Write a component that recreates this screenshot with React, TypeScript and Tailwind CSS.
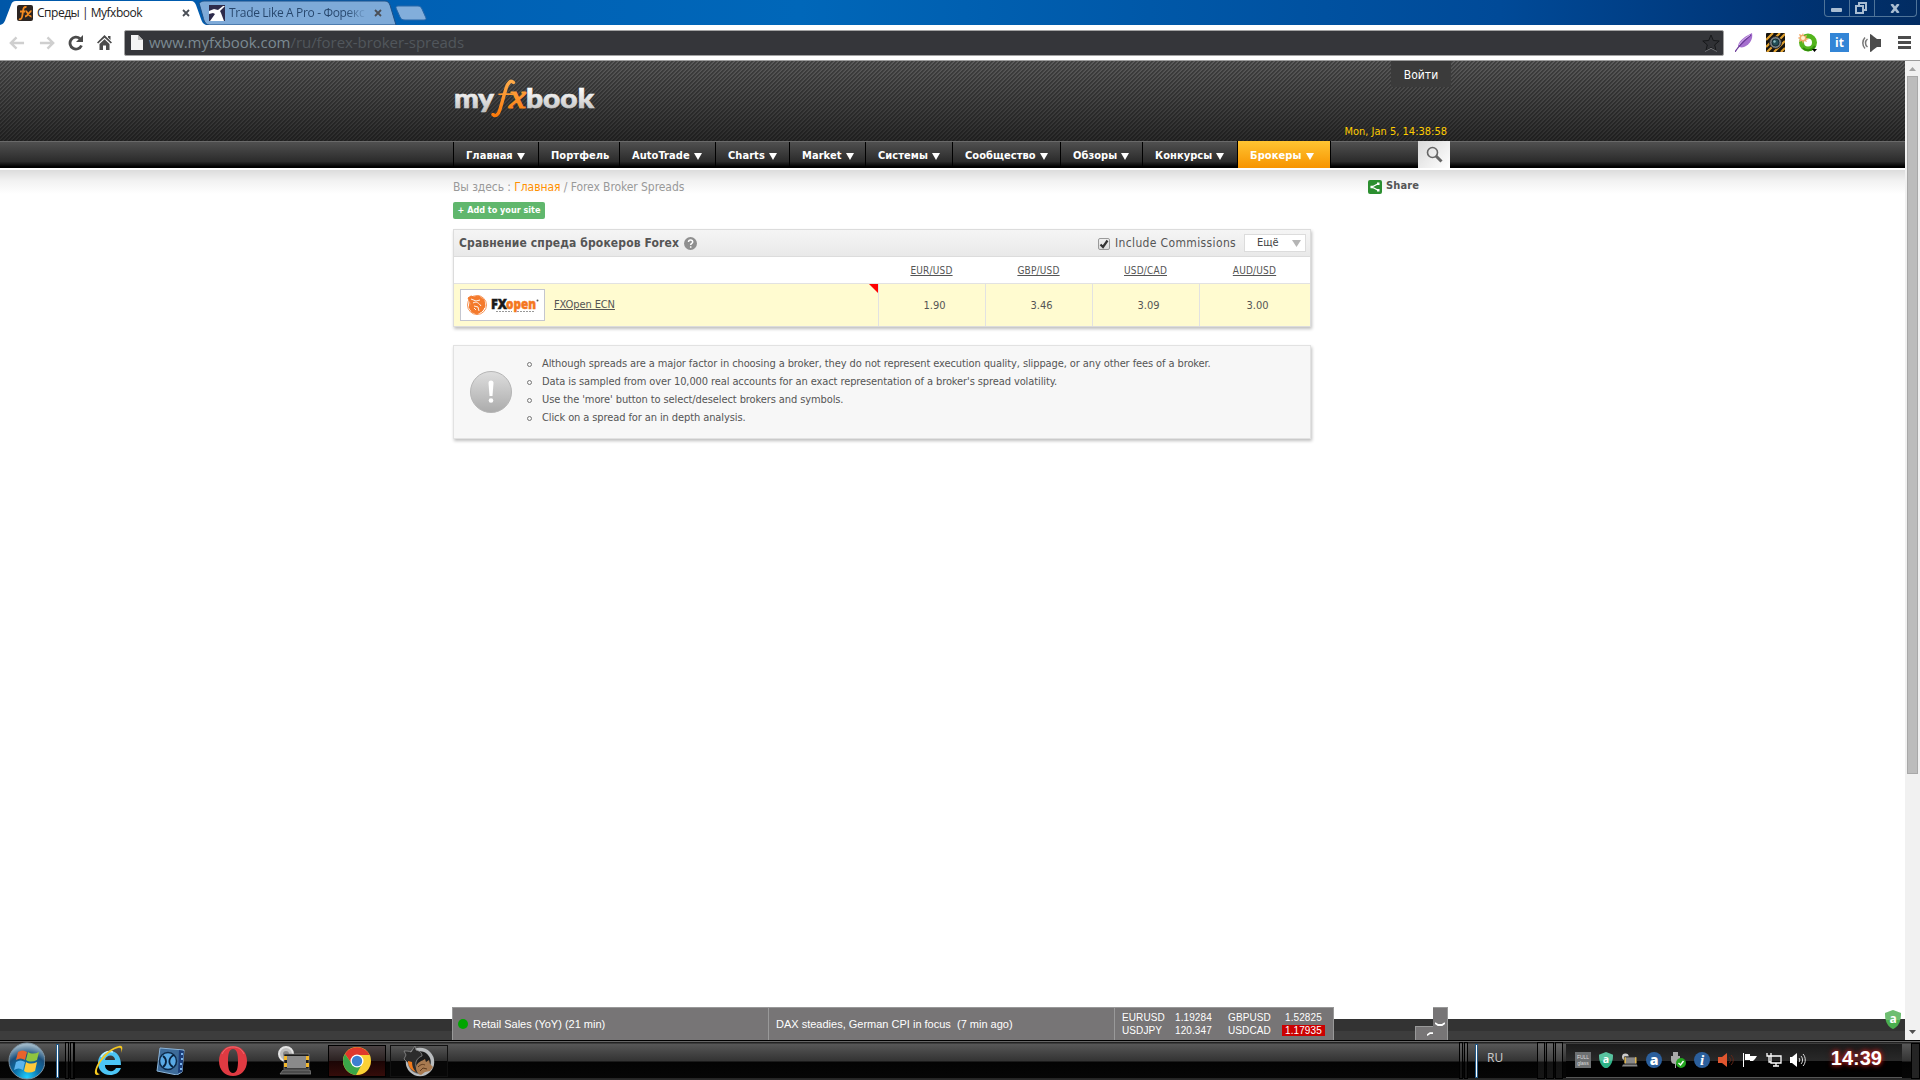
import type { ReactNode } from 'react';

const navItems = [
  { label: 'Главная', width: 'w-[85px]', menu: true },
  { label: 'Портфель', width: 'w-[81px]', menu: false },
  { label: 'AutoTrade', width: 'w-[96px]', menu: true },
  { label: 'Charts', width: 'w-[74px]', menu: true },
  { label: 'Market', width: 'w-[76px]', menu: true },
  { label: 'Системы', width: 'w-[87px]', menu: true },
  { label: 'Сообщество', width: 'w-[108px]', menu: true },
  { label: 'Обзоры', width: 'w-[82px]', menu: true },
  { label: 'Конкурсы', width: 'w-[95px]', menu: true },
];

const spreads = [
  { pair: 'EUR/USD', value: '1.90' },
  { pair: 'GBP/USD', value: '3.46' },
  { pair: 'USD/CAD', value: '3.09' },
  { pair: 'AUD/USD', value: '3.00' },
];

const notes = [
  'Although spreads are a major factor in choosing a broker, they do not represent execution quality, slippage, or any other fees of a broker.',
  "Data is sampled from over 10,000 real accounts for an exact representation of a broker's spread volatility.",
  "Use the 'more' button to select/deselect brokers and symbols.",
  'Click on a spread for an in depth analysis.',
];

function TabStrip() {
  return (
    <div className="relative h-[25px] shrink-0 bg-[linear-gradient(90deg,#0057a8_0,#0060b4_400px,#0067b9_800px,#0058a8_1150px,#004a98_1500px,#003475_1780px,#022c62_1920px)]">
      <svg className="absolute inset-0" width="430" height="25" viewBox="0 0 430 25">
        <path d="M199 3c2-1 3-2 5-2h181c3 0 4 2 5 4l6 20H209c-4-1-5-4-6-8z" fill="#7eaad8" stroke="#1d4f86" strokeWidth="1" />
        <path d="M0 25c4-1 5-4 6-7l5-13c1-3 2-4 5-4h175c3 0 4 2 5 4l5 14c1 3 2 5 5 6z" fill="#fff" />
        <path d="M398 6h20c2 0 3 1 4 3l4 9c0 1 0 2-2 2h-19c-3 0-4-1-5-3l-4-9c0-1 0-2 2-2z" fill="#82aedb" stroke="#2766a8" strokeWidth="1" />
      </svg>
      <div className="relative flex h-[25px] items-center font-['Open_Sans','Noto_Sans',sans-serif] text-[12px] text-[#222]">
        <div className="ml-[17px] flex w-[173px] items-center">
          <svg width="16" height="16" viewBox="0 0 16 16">
            <rect width="16" height="16" rx="2" fill="#2c2522" />
            <g fill="none" stroke="#f68b1f" strokeWidth="1.8">
              <path d="M2 14c2 1 3-1 3.400-4l1-6c.4-2 2-2.500 3-1.500M3 6.500h5" />
              <path d="M8.500 6c2 0 3 6 6 5.500M14.500 6c-2 0-3.500 5.500-6.500 5.500" />
            </g>
          </svg>
          <span className="ml-[4px] tracking-[-0.48px]">Спреды | Myfxbook</span>
          <CloseIcon className="ml-auto" />
        </div>
        <div className="ml-[19px] flex w-[173px] items-center">
          <svg width="16" height="16" viewBox="0 0 16 16">
            <rect width="16" height="16" fill="#2d2a4a" />
            <path d="M0 6l5-2 4 1 5-4h2l-5 5 1 2 3 8H1l5-7-2-1-4 1z" fill="#fff" />
          </svg>
          <span className="ml-[4px] w-[138px] overflow-hidden bg-[linear-gradient(90deg,#26466c_85%,transparent)] bg-clip-text tracking-[-0.34px] whitespace-nowrap text-transparent">
            Trade Like A Pro - Форекс
          </span>
          <CloseIcon className="ml-auto" />
        </div>
      </div>
      <div className="absolute top-0 right-[3px] flex h-[17px] w-[93px] rounded-b-[4px] border border-t-0 border-[#4f7499] text-[#b4c5d8]">
        <div className="flex w-[25px] items-end justify-center border-r border-[#4f7499] pr-[2px] pb-[4px]">
          <span className="h-[4px] w-[11px] rounded-[1px] bg-[#a9bdd2]" />
        </div>
        <div className="flex w-[25px] items-center justify-center border-r border-[#4f7499] pr-[2px]">
          <svg width="12" height="12" viewBox="0 0 12 12" fill="none" stroke="#a9bdd2" strokeWidth="2">
            <path d="M4 3V1h7v7H9M1 4h7v7H1z" />
          </svg>
        </div>
        <div className="flex flex-1 items-center justify-center pr-[2px]">
          <svg width="10" height="9" viewBox="0 0 10 9" stroke="#a9bdd2" strokeWidth="2.600">
            <path d="M1.500 0l7 9M8.500 0l-7 9" />
          </svg>
        </div>
      </div>
    </div>
  );
}

function CloseIcon({ className }: { className: string }) {
  return (
    <svg className={className} width="8" height="8" viewBox="0 0 8 8" stroke="#4a4f57" strokeWidth="1.800">
      <path d="M1 1l6 6M7 1L1 7" />
    </svg>
  );
}

function Toolbar() {
  return (
    <div className="flex h-[36px] shrink-0 items-center border-b border-[#9b9b9b] bg-white">
      <div className="flex w-[124px] items-center pl-[9px]">
        <svg width="16" height="14" viewBox="0 0 17 14" fill="none" stroke="#cfcfcf" strokeWidth="2.600">
          <path d="M16 7H3M8 1L2 7l6 6" />
        </svg>
        <svg className="ml-[14px]" width="16" height="14" viewBox="0 0 17 14" fill="none" stroke="#cfcfcf" strokeWidth="2.600">
          <path d="M1 7h13M9 1l6 6-6 6" />
        </svg>
        <svg className="ml-[13px]" width="16" height="16" viewBox="0 0 16 16">
          <path d="M13.500 10.500A6 6 0 1 1 12 3.600" fill="none" stroke="#4b4b4b" strokeWidth="2.800" />
          <path d="M15 0v7H8z" fill="#4b4b4b" />
        </svg>
        <svg className="ml-[13px]" width="15" height="15" viewBox="0 0 15 15" fill="#4b4b4b">
          <path d="M7.500 0L15 7.500l-1.200 1L7.500 2.700 1.200 8.500 0 7.500zM11 1h2.500v4L11 2.600zM7.500 4.200l5 4.800v6H9v-4.500H6V15H2.500V9z" />
        </svg>
      </div>
      <div className="flex h-[26px] w-[1600px] items-center rounded-[2px] border border-[#a3a3a3] bg-[#35363a] pr-[3px] pl-[6px]">
        <svg width="12" height="15" viewBox="0 0 12 15">
          <path d="M0 0h7l5 5v10H0z" fill="#f4f4f4" />
          <path d="M7 0v5h5z" fill="#b9b9b9" />
        </svg>
        <span className="ml-[6px] font-['Open_Sans','Noto_Sans',sans-serif] text-[15px] tracking-[-0.05px] text-[#51565c]">
          <span className="text-[#7b8a92]">www.myfxbook.com</span>/ru/forex-broker-spreads
        </span>
        <svg className="ml-auto" width="18" height="18" viewBox="0 0 18 18" fill="#303135" stroke="#17181a">
          <path d="M9 1l2.300 5.500 5.900.5-4.500 3.900 1.400 5.800L9 13.600l-5.100 3.100 1.400-5.800L.8 7l5.900-.5z" />
          <path d="M3 17.500l6-3.200 6 3.200" fill="none" stroke="#85868a" strokeWidth="0.800" />
        </svg>
      </div>
      <Extensions />
    </div>
  );
}

function Extensions() {
  return (
    <div className="flex flex-1 items-center pl-[11px]">
      <svg width="18" height="19" viewBox="0 0 18 19">
        <path d="M17 0c1 5-1 11-8 14-3 1-5 0-6-1C4 7 11 3 17 0z" fill="#a56fce" />
        <path d="M0 19C4 12 9 8 16 2" fill="none" stroke="#6b3a98" strokeWidth="1.200" />
        <path d="M4 12C7 7 11 5 15 2" fill="none" stroke="#d3b4ea" />
      </svg>
      <svg className="ml-[13px]" width="19" height="19" viewBox="0 0 19 19">
        <rect width="19" height="19" rx="1" fill="#15130f" />
        <path d="M0 7l7-7M0 14L14 0M1 19L19 1M8 19l11-11M15 19l4-4" stroke="#e0a030" strokeWidth="2.200" />
        <circle cx="9.500" cy="9.500" r="6" fill="#777d80" stroke="#222" />
        <circle cx="9.500" cy="9.500" r="3.500" fill="#244f58" stroke="#132c32" />
        <circle cx="8.500" cy="8.500" r="1.200" fill="#8ec0c4" />
      </svg>
      <svg className="ml-[13px]" width="20" height="19" viewBox="0 0 20 19">
        <circle cx="10" cy="9.500" r="6.500" fill="none" stroke="#53b51d" strokeWidth="5" />
        <path d="M5 15a7.500 7.500 0 0 0 12-2" fill="none" stroke="#318c0b" strokeWidth="2" />
        <path d="M5 0l1 3 3-1-1 3 3 1-3 1 1 2-3-1-1 3-1-3-3 1 1-3-3-1 3-1-1-3 3 1z" fill="#f0a868" />
        <circle cx="5" cy="5" r="2" fill="#fff0cf" />
        <path d="M14 16h5l-2.500 3z" />
      </svg>
      <div className="ml-[12px] flex h-[19px] w-[19px] items-center justify-center bg-[#3385d6] font-['Open_Sans',sans-serif] text-[12px] font-bold text-white">it</div>
      <svg className="ml-[13px]" width="20" height="18" viewBox="0 0 20 18">
        <path d="M8 0c1 0 2 1 3 2l4 3h4v8h-4l-4 3c-1 1-2 2-3 2z" fill="#4c4c4c" />
        <path d="M5.500 5a5 5 0 0 0 0 8M3 3.500a8 8 0 0 0 0 11" fill="none" stroke="#777" strokeWidth="1.500" />
      </svg>
      <div className="ml-[16px] flex w-[13px] flex-col gap-[2px]">
        <span className="h-[3px] bg-[#4c4c4c]" />
        <span className="h-[3px] bg-[#4c4c4c]" />
        <span className="h-[3px] bg-[#4c4c4c]" />
      </div>
    </div>
  );
}

function Logo() {
  return (
    <svg width="143" height="42" viewBox="0 0 143 42">
      <defs>
        <linearGradient id="logoWhite" x1="0" y1="0" x2="0" y2="1">
          <stop offset="0.2" stopColor="#fff" />
          <stop offset="0.9" stopColor="#c4c4c4" />
        </linearGradient>
        <linearGradient id="logoOrange" gradientUnits="userSpaceOnUse" x1="0" y1="0" x2="0" y2="38">
          <stop offset="0" stopColor="#ffae4d" />
          <stop offset="1" stopColor="#f9780a" />
        </linearGradient>
      </defs>
      <g className="font-['Lato',sans-serif]" fill="url(#logoWhite)" stroke="url(#logoWhite)" strokeWidth="0.700" fontWeight="900" fontSize="27">
        <text x="1" y="29" textLength="40" lengthAdjust="spacingAndGlyphs">my</text>
        <text x="73" y="29" textLength="68" lengthAdjust="spacingAndGlyphs">book</text>
      </g>
      {/* the long swash of the mark */}
      <g fill="none" stroke="url(#logoOrange)" strokeLinecap="round">
        <path d="M40 35.500c2.500 2.500 5.500 0 7-5l6-21c2-6 5-9 7.500-6" strokeWidth="3.400" />
        <path d="M46 15.200c5 0 9-.2 14 0" strokeWidth="1.600" />
      </g>
      <text
        className="font-['Liberation_Serif',serif]"
        x="56"
        y="29"
        fontSize="34"
        fontStyle="italic"
        fill="url(#logoOrange)"
        stroke="url(#logoOrange)"
        strokeWidth="1.200"
        textLength="17"
        lengthAdjust="spacingAndGlyphs"
      >
        x
      </text>
    </svg>
  );
}

function Header() {
  return (
    <header className="shrink-0">
      <div className="h-[80px] bg-[repeating-linear-gradient(135deg,rgba(0,0,0,0.32)_0,rgba(0,0,0,0.32)_1px,transparent_1.800px,transparent_2.828px),linear-gradient(#5e5e5e,#2c2c2c)]">
        <div className="ml-[453px] flex h-[80px] w-[998px] justify-between">
          <div className="pt-[18px]">
            <Logo />
          </div>
          <div className="flex flex-col items-end justify-between">
            <a className="flex h-[26px] w-[60px] items-center justify-center bg-[#3b3b3b] pt-[2px] text-[12px] text-white">Войти</a>
            <span className="mr-[4px] mb-px text-[11px] text-[#fc0]">Mon, Jan 5, 14:38:58</span>
          </div>
        </div>
      </div>
      <nav className="flex h-[27px] border-t border-[#6a6a6a] bg-[linear-gradient(#505050,#2b2b2b_75%,#000_95%)] pl-[453px] text-[11px] font-bold text-white">
        {navItems.map((item) => (
          <NavItem key={item.label} width={item.width} menu={item.menu}>
            {item.label}
          </NavItem>
        ))}
        <div className="-mt-px flex w-[94px] items-center gap-[4px] border-x border-black bg-[linear-gradient(#ffc432,#f79400)] pt-[3px] pl-[12px]">
          <span className="tracking-[0.1px]">Брокеры</span>
          <Caret />
        </div>
        <div className="-mt-px ml-[87px] flex w-[32px] items-center justify-center bg-[linear-gradient(135deg,#d9d9d9,#fff)]">
          <svg width="17" height="17" viewBox="0 0 17 17" fill="none" stroke="#666">
            <circle cx="6.500" cy="6.500" r="5" strokeWidth="1.600" />
            <path d="M10 10l5.500 5.500" strokeWidth="3" />
          </svg>
        </div>
      </nav>
    </header>
  );
}

function NavItem({ width, menu, children }: { width: string; menu: boolean; children: ReactNode }) {
  return (
    <div className={`flex items-center gap-[4px] border-l border-black pt-[2px] pl-[12px] ${width}`}>
      <span className="tracking-[0.06px]">{children}</span>
      {menu && <Caret />}
    </div>
  );
}

function Caret() {
  return (
    <svg width="8" height="7" viewBox="0 0 8 7" fill="#fff">
      <path d="M0 0h8L4 7z" />
    </svg>
  );
}

function SpreadPanel() {
  return (
    <section className="mt-[10px] h-[98px] w-[858px] border border-[#dcdcdc] shadow-[1px_2px_3px_rgba(0,0,0,0.25)]">
      <div className="flex h-[27px] items-center border-b border-[#dcdcdc] bg-[linear-gradient(#f5f5f5,#e9e9e9)] pl-[5px]">
        <h1 className="text-[12px] font-bold tracking-[0.12px] text-[#555]">Сравнение спреда брокеров Forex</h1>
        <svg className="ml-[5px]" width="13" height="13" viewBox="0 0 13 13">
          <circle cx="6.500" cy="6.500" r="6.500" fill="#8f8f8f" />
          <path d="M4.500 5c0-3 4.200-2.500 4.200 0 0 1.500-2 1.400-2 3M6.700 9.200v1.500" fill="none" stroke="#fff" strokeWidth="1.500" />
        </svg>
        <div className="ml-auto flex items-center">
          <span className="mt-[2px] flex h-[12px] w-[12px] items-center justify-center rounded-[2px] border border-[#9a9a9a] bg-[linear-gradient(#efefef,#dcdcdc)]">
            <svg width="10" height="10" viewBox="0 0 10 10" fill="none" stroke="#333" strokeWidth="2.200">
              <path d="M1.500 5.500l2.500 2.500L8.500 1.500" />
            </svg>
          </span>
          <span className="ml-[5px] w-[121px] text-[12px] tracking-[0.36px] whitespace-nowrap text-[#555]">Include Commissions</span>
          <span className="mr-[4px] ml-[8px] flex h-[18px] w-[62px] items-center border border-[#dcdcdc] bg-white pt-px pl-[12px] text-[11px] text-[#444]">
            Ещё
            <svg className="mr-[4px] ml-auto" width="9" height="7" viewBox="0 0 9 7" fill="#b5b5b5">
              <path d="M0 0h9L4.500 7z" />
            </svg>
          </span>
        </div>
      </div>
      <div className="flex h-[27px] items-center border-b border-[#e2e2e2] bg-white pl-[424px] text-[10px] text-[#555]">
        {spreads.map((s) => (
          <div key={s.pair} className="flex w-[107px] justify-center last:w-[111px]">
            <span className="tracking-[0.2px] underline underline-offset-1">{s.pair}</span>
          </div>
        ))}
      </div>
      <div className="flex h-[42px] bg-[#fffbd0] text-[11px] text-[#555]">
        <div className="relative flex w-[424px] items-center pl-[6px]">
          <div className="flex h-[32px] w-[85px] items-center border border-[#c4c6cf] bg-white pl-[5px]">
            <FxOpenLogo />
          </div>
          <span className="ml-[9px] tracking-[-0.1px] underline underline-offset-1">FXOpen ECN</span>
          <svg className="absolute top-0 right-0" width="9" height="9" viewBox="0 0 9 9">
            <path d="M0 0h9v9z" fill="#f00" />
          </svg>
        </div>
        {spreads.map((s) => (
          <div key={s.pair} className="flex w-[107px] items-center justify-center border-l border-[#e2e2e2] pt-[2px] pl-[5px] last:w-[111px]">
            {s.value}
          </div>
        ))}
      </div>
    </section>
  );
}

function FxOpenLogo() {
  return (
    <svg width="74" height="24" viewBox="0 0 74 24">
      <g fill="none" stroke="#f47a2c">
        <circle cx="11" cy="12" r="9.500" strokeWidth="0.800" />
        <circle cx="11" cy="12" r="7.500" strokeWidth="1" />
        <path d="M2 5l3-2 3 1 5-1 5 4 1 6-3 5-5 3-5-2-3-5 2-3z" fill="#f47a2c" />
        <path d="M5 6l5 2 4-1M7 10c3-2 6 0 8 3M8 13l4 1 1 4M10 17l-2-2" stroke="#fff" strokeWidth="0.900" />
      </g>
      <g className="font-['Open_Sans',sans-serif]" fontWeight="800" fontSize="14" strokeWidth="0.500">
        <text x="25" y="16" textLength="16" fill="#1a1a1a" stroke="#1a1a1a" lengthAdjust="spacingAndGlyphs">FX</text>
        <text x="40" y="16" textLength="30" fill="#f4771f" stroke="#f4771f" lengthAdjust="spacingAndGlyphs">open</text>
      </g>
      <path d="M30 18.500h16M51 18.500h18" stroke="#999" strokeDasharray="2 1" />
      <circle cx="71.500" cy="7.500" r="1" fill="#555" />
    </svg>
  );
}

function NotesPanel() {
  return (
    <section className="mt-[18px] flex h-[94px] w-[858px] items-center border border-[#e2e2e2] bg-[#f7f7f7] shadow-[1px_2px_3px_rgba(0,0,0,0.25)]">
      <svg className="-mt-px ml-[16px]" width="42" height="42" viewBox="0 0 42 42">
        <defs>
          <linearGradient id="noteBadge" x1="0" y1="0" x2="0" y2="1">
            <stop offset="0" stopColor="#dedede" />
            <stop offset="1" stopColor="#ababab" />
          </linearGradient>
        </defs>
        <circle cx="21" cy="21" r="20.500" fill="url(#noteBadge)" stroke="#b5b5b5" />
        <path d="M18.500 12a2.500 2.500 0 0 1 5 0L22.500 25h-3z" fill="#fff" />
        <circle cx="21" cy="29.500" r="2.300" fill="#fff" />
      </svg>
      <ul className="-mt-[3px] ml-[15px] text-[11px] leading-[18px] tracking-[-0.1px] text-[#555]">
        {notes.map((note, i) => (
          <li key={i} className="flex items-center">
            <span className="mt-[2px] mr-[10px] h-[5px] w-[5px] rounded-full border border-[#777]" />
            <span className="whitespace-nowrap">{note}</span>
          </li>
        ))}
      </ul>
    </section>
  );
}

function Page() {
  return (
    <main className="flex min-h-0 flex-1 flex-col border-t border-white bg-[linear-gradient(#fff_0,#fff_1px,#dcdcdc_1px,#f2f2f2_12px,#fff_25px)] pl-[453px]">
      <div className="flex h-[33px] w-[998px] shrink-0 items-center pt-[2px] text-[12px] text-[#999]">
        <span className="tracking-[-0.07px] whitespace-nowrap">
          Вы здесь : <a className="text-[#ff9000]">Главная</a> / Forex Broker Spreads
        </span>
        <span className="mr-[32px] ml-auto flex items-center gap-[4px] text-[11px] font-bold tracking-[0.1px] text-[#555]">
          <svg width="14" height="14" viewBox="0 0 14 14">
            <rect width="14" height="14" rx="2" fill="#2c8f30" />
            <path d="M10.500 3.500L4 7l6.500 3.500" fill="none" stroke="#fff" strokeWidth="1.300" />
            <path d="M9 2.500h2.500V5H9zM9 9h2.500v2.500H9zM2.500 5.800H5v2.500H2.500z" fill="#fff" />
          </svg>
          Share
        </span>
      </div>
      <a className="flex h-[17px] w-[92px] shrink-0 items-center justify-center rounded-[2px] bg-[#60b76d] pt-px text-[9px] font-bold whitespace-nowrap text-white">
        + Add to your site
      </a>
      <SpreadPanel />
      <NotesPanel />
    </main>
  );
}

function Ticker() {
  return (
    <div className="absolute right-0 bottom-0 left-0 flex h-[33px] items-end pl-[452px] font-['Liberation_Sans',Arial,sans-serif] text-[11px] text-white">
      <div className="flex h-[33px] w-[882px] border border-b-0 border-[#999] bg-[#777576]">
        <div className="flex w-[315px] items-center pl-[5px]">
          <span className="mr-[5px] h-[10px] w-[10px] rounded-full bg-[#00a500]" />
          Retail Sales (YoY) (21 min)
        </div>
        <div className="flex w-[346px] items-center border-l border-[#999] pl-[7px] whitespace-pre">DAX steadies, German CPI in focus  (7 min ago)</div>
        <div className="grid flex-1 grid-cols-[53px_53px_54px_43px] content-center border-l border-[#999] pl-[7px] text-[10px] leading-[13px] tracking-[0.1px]">
          <span>EURUSD</span>
          <span>1.19284</span>
          <span>GBPUSD</span>
          <span className="pl-[3px]">1.52825</span>
          <span>USDJPY</span>
          <span>120.347</span>
          <span>USDCAD</span>
          <span className="mt-px h-[11px] bg-[#c00] pl-[3px] leading-[11px]">1.17935</span>
        </div>
      </div>
      <div className="ml-[81px] flex h-[14px] w-[18px] items-center justify-center border border-r-0 border-b-0 border-[#999] bg-[#777576]">
        <svg className="ml-[11px]" width="7" height="4" viewBox="0 0 7 4" fill="none" stroke="#fff" strokeWidth="1.800">
          <path d="M0 3.500L3.500 1H7" />
        </svg>
      </div>
      <div className="flex h-[33px] w-[15px] items-center justify-center border-t border-r border-[#999] bg-[#777576]">
        <svg width="10" height="5" viewBox="0 0 10 5" fill="none" stroke="#fff" strokeWidth="1.800">
          <path d="M0 1l3 2h4l3-2" />
        </svg>
      </div>
    </div>
  );
}

function Shield({ size, color }: { size: number; color: string }) {
  return (
    <svg width={size} height={size * 1.2} viewBox="0 0 16 19">
      <path d="M8 0l8 3c0 8-2 13-8 16C2 16 0 11 0 3z" fill={color} />
      <path d="M8 0l8 3c0 3 0 5-1 7H1C0 8 0 6 0 3z" fill="#fff" opacity="0.2" />
      <text className="font-['Open_Sans',sans-serif]" x="8" y="13" textAnchor="middle" fontSize="12" fontWeight="700" fill="#fff">a</text>
    </svg>
  );
}

function Scrollbar() {
  return (
    <div className="flex w-[15px] flex-col items-center justify-between bg-[#f1f1f1] pt-[6px] pb-[6px]">
      <div className="flex flex-col items-center">
        <svg width="7" height="4" viewBox="0 0 7 4" fill="#a3a3a3">
          <path d="M0 4l3.500-4L7 4z" />
        </svg>
        <div className="mt-[5px] h-[698px] w-[11px] border border-[#a8a8a8] bg-[#bcbcbc]" />
      </div>
      <svg width="7" height="4" viewBox="0 0 7 4" fill="#505050">
        <path d="M0 0h7L3.500 4z" />
      </svg>
    </div>
  );
}

function Taskbar() {
  return (
    <footer className="flex h-[40px] shrink-0 items-center border-t border-black bg-[linear-gradient(#666_0,#666_1px,#222_1px,#222_2px,#575757_3px,#333_20px,#030303_21px,#060606_37px,#444_38px,#111_39px)]">
      <svg className="ml-[7px]" width="38" height="38" viewBox="0 0 38 38">
        <defs>
          <radialGradient id="orb" cx="0.5" cy="0.95" r="0.9">
            <stop offset="0" stopColor="#1fd0ff" />
            <stop offset="0.4" stopColor="#0b6fa8" />
            <stop offset="0.7" stopColor="#1a4f7c" />
            <stop offset="1" stopColor="#9fb8c8" />
          </radialGradient>
        </defs>
        <circle cx="20" cy="19" r="18" fill="url(#orb)" stroke="#7d93a3" />
        <path d="M11 10c3-2 6-2 9 0l-2 8c-3-2-6-2-9 0z" fill="#e8632b" />
        <path d="M21 10c3 2 7 2 11 0l-2 8c-4 2-8 2-11 0z" fill="#8fc43f" />
        <path d="M9 20c3-2 6-2 9 0l-2 8c-3-2-6-2-9 0z" fill="#5cb4ee" />
        <path d="M19 20c3 2 7 2 11 0l-2 9c-4 2-8 2-11 0z" fill="#fdc93a" />
      </svg>
      <span className="ml-[11px] h-[34px] w-[3px] border border-[#245a86] bg-white" />
      <Grips count={2} />
      <div className="flex h-[37px] flex-1 items-center border-l border-black">
        <div className="ml-[18px]"><ExplorerIcon /></div>
        <div className="ml-[31px]"><VideoIcon /></div>
        <div className="ml-[33px]">
          <svg width="28" height="30" viewBox="0 0 28 30">
            <path fillRule="evenodd" d="M14 0c8 0 14 6 14 15s-6 15-14 15S0 24 0 15 6 0 14 0zm0 3c-4 0-5 5-5 12s1 12 5 12 5-5 5-12-1-12-5-12z" fill="#e03a42" />
            <path d="M3 8C6 2 10 1 14 1s8 1 11 7" fill="none" stroke="#f28a8d" opacity="0.6" />
          </svg>
        </div>
        <div className="ml-[31px]"><LaptopIcon /></div>
        <div className="ml-[17px] flex h-[32px] w-[58px] items-center justify-center border border-black bg-[linear-gradient(#4b4344,#2a2020_50%,#1b0505_51%,#350c0a)]">
          <ChromeIcon />
        </div>
        <div className="ml-[4px] flex h-[32px] w-[58px] items-center justify-center border border-[#111] bg-[linear-gradient(#555,#2c2c2c_50%,#070707_51%)]">
          <BeastIcon />
        </div>
      </div>
      <Grips count={2} />
      <span className="ml-[7px] h-[34px] w-[3px] border border-[#245a86] bg-white" />
      <div className="ml-[9px] flex h-[39px] w-[50px] items-center font-['Open_Sans',sans-serif] text-[12px] text-[#ccc]">
        <span className="-mt-[5px]">RU</span>
      </div>
      <Grips count={3} />
      <div className="ml-[3px] flex h-[34px] w-[336px] items-center border-b border-[#555] bg-[linear-gradient(#1b1b1b,#292929_50%,#020202_51%)] pl-[9px]">
        <Tray />
        <span className="mr-[20px] -mt-[5px] ml-auto font-['Liberation_Sans',Arial,sans-serif] text-[20px] font-bold text-white [text-shadow:0_0_4px_#c33,0_0_6px_#900]">
          14:39
        </span>
      </div>
      <div className="ml-[9px] h-[36px] w-[9px] border border-black bg-[#242424]" />
    </footer>
  );
}

function Grips({ count }: { count: number }) {
  return (
    <div className={count === 3 ? 'flex gap-px' : 'ml-[6px] flex gap-px'}>
      {Array.from({ length: count }, (_, i) => (
        <span key={i} className={count === 3 ? 'h-[37px] w-[8px] border border-black bg-[#fff1]' : 'h-[37px] w-[4px] border border-black bg-[#fff1]'} />
      ))}
    </div>
  );
}

function ExplorerIcon() {
  return (
    <svg width="32" height="32" viewBox="0 0 32 32">
      <path d="M28 20H12c0 7 9 8 11 3h5c-2 5-6 7-11 7C9 30 5 24 5 18 5 11 10 6 17 6c7 0 11 6 11 14zM12 15h10c0-6-9-6-10 0z" fill="#4cc5f5" />
      <path d="M8 12c3-5 8-6 12-5" fill="none" stroke="#c6f0ff" strokeWidth="1.500" />
      <path d="M7 29C2 32 0 28 4 20 9 10 19 2 26 1c4-1 4 3 2 7 1-4 0-6-3-5C17 5 8 15 5 22c-2 4-1 7 2 7z" fill="#f7c91f" />
    </svg>
  );
}

function VideoIcon() {
  return (
    <svg width="30" height="28" viewBox="0 0 30 28">
      <path d="M4 1l24 2-2 22-5 3L1 24z" fill="#3d6b99" stroke="#8cb4d8" />
      <path d="M23 3l5 1-2 21-4 1z" fill="#1c3d78" />
      <path d="M25 7h2M25 12h2M24 17h2M24 22h2" stroke="#7ab4ec" strokeWidth="2" />
      <circle cx="12" cy="14" r="8.500" fill="#5aa9e4" stroke="#0d2a4a" strokeWidth="1.500" />
      <path d="M7 9c4 3 4 8 0 11M18 8c-6 3-6 9-1 12" fill="none" stroke="#08203c" strokeWidth="1.800" />
    </svg>
  );
}

function LaptopIcon() {
  return (
    <svg width="33" height="29" viewBox="0 0 33 29">
      <circle cx="8" cy="8" r="7" fill="#bdbdbd" stroke="#e5e5e5" strokeWidth="2" />
      <circle cx="8" cy="8" r="3" fill="#888" />
      <path d="M6 8h25v15H6z" fill="#1b1b1b" stroke="#888" strokeWidth="0.700" />
      <path d="M9 10h19v12H9z" fill="#8a8a8a" />
      <path d="M6 10h3v4H6zM6 17h3v4H6zM28 10h3v4h-3zM28 17h3v4h-3z" fill="#f3b72b" />
      <path d="M5 24h27l1 4H2z" fill="#4b4b4b" stroke="#8a8a8a" strokeWidth="0.700" />
    </svg>
  );
}

function ChromeIcon() {
  return (
    <svg width="28" height="28" viewBox="0 0 28 28">
      <circle cx="14" cy="14" r="14" fill="#fbd034" />
      <path d="M14 8h12.500A14 14 0 0 0 1.900 7L9 17z" fill="#e0382c" />
      <path d="M1.900 7A14 14 0 0 0 13 28l6-11-10 0z" fill="#3aa648" />
      <circle cx="14" cy="14" r="6.500" fill="#fff" />
      <circle cx="14" cy="14" r="5.200" fill="#3d7fd0" />
    </svg>
  );
}

function BeastIcon() {
  return (
    <svg width="32" height="32" viewBox="0 0 32 32">
      <circle cx="17" cy="17" r="12.500" fill="#1b1b1b" stroke="#b9bcbe" strokeWidth="3.500" />
      <path d="M1 6c3 0 5 0 7 1l2-3 2-3 1 4c4 1 6 3 6 6-3 1-5 3-6 6-1 4 1 8 4 12-7-1-11-5-12-11L1 14l2-4z" fill="#2c2c2c" stroke="#8b8b8b" strokeWidth="0.800" />
      <path d="M5 16l4 1c0 4 1 7 4 10-5-2-8-6-8-11z" fill="#f07a1b" />
      <path d="M13 22c1-5 6-6 9-8l1 3 3-2 1 4 3 3-3 4-5 1-4 3c-4-1-5-5-5-8z" fill="#a87a50" />
      <path d="M15 22c3-3 5-3 7-2M17 26l3-3 4 1" stroke="#5d3a1d" fill="none" />
    </svg>
  );
}

function Tray() {
  return (
    <div className="flex items-center gap-[8px]">
      <div className="flex h-[16px] w-[16px] flex-col items-center justify-center bg-[#6d7072] font-['Liberation_Sans',sans-serif] text-[5px] leading-[6px] text-[#ddd]">
        <span>FULL</span>
        <span>glass</span>
      </div>
      <Shield size={14} color="#2fb488" />
      <svg width="17" height="14" viewBox="0 0 33 29">
        <circle cx="8" cy="8" r="7" fill="#ccc" />
        <path d="M6 8h25v15H6z" fill="#888" stroke="#222" strokeWidth="2" />
        <path d="M6 9h3v12H6zM28 9h3v12h-3z" fill="#e5b94c" />
        <path d="M3 24h29l1 4H1z" fill="#888" />
      </svg>
      <svg width="16" height="16" viewBox="0 0 16 16">
        <circle cx="8" cy="8" r="8" fill="#2b5f9c" />
        <text className="font-['Open_Sans',sans-serif]" x="8" y="12.500" textAnchor="middle" fontSize="14" fontWeight="800" fill="#fff">a</text>
      </svg>
      <svg width="16" height="16" viewBox="0 0 16 16">
        <path d="M3 0h5v4H3zM1 4h9v4c0 3-2 4-4 4v4H5v-4c-2 0-4-1-4-4z" fill="#a9a9a9" />
        <circle cx="11" cy="11" r="5" fill="#23a51f" />
        <path d="M8.500 11l2 2 3-4" fill="none" stroke="#fff" strokeWidth="1.400" />
      </svg>
      <svg width="16" height="16" viewBox="0 0 16 16">
        <circle cx="8" cy="8" r="8" fill="#2b5f9c" />
        <text className="font-['Liberation_Serif',serif]" x="8" y="13" textAnchor="middle" fontSize="15" fontWeight="700" fontStyle="italic" fill="#fff">i</text>
      </svg>
      <svg width="16" height="14" viewBox="0 0 16 14">
        <path d="M0 4h4l5-4v14l-5-4H0z" fill="#e1562f" />
        <path d="M11 4c2 2 2 4 0 6M13 2c3 3 3 7 0 10" fill="none" stroke="#642617" />
      </svg>
      <svg width="16" height="15" viewBox="0 0 16 15" fill="#fff">
        <path d="M1 1h1v14H1zM3 2h5v6H3zM8 4h7l-2 3-2 2H8z" />
      </svg>
      <svg width="16" height="15" viewBox="0 0 16 15" fill="none" stroke="#fff" strokeWidth="1.300">
        <path d="M5 4h10v7H5zM7 14h6M10 11v3M1 1v3h4V1M3 4v6h2" />
      </svg>
      <svg width="16" height="14" viewBox="0 0 16 14">
        <path d="M0 4h2l5-4v14l-5-4H0z" fill="#fff" />
        <path d="M9 5c1 1 1 3 0 4M11 3c2 2 2 6 0 8M13 1c3 3 3 9 0 12" fill="none" stroke="#ddd" />
      </svg>
    </div>
  );
}

export default function App() {
  return (
    <div className="flex h-[1080px] w-[1920px] flex-col overflow-hidden bg-white font-['DejaVu_Sans_Condensed','DejaVu_Sans',sans-serif]">
      <TabStrip />
      <Toolbar />
      <div className="flex min-h-0 flex-1">
        <div className="relative flex flex-1 flex-col">
          <Header />
          <Page />
          <div className="h-[12px] shrink-0 bg-[#333]" />
          <div className="h-[9px] shrink-0 bg-[#3d3d3d]" />
          <Ticker />
          <div className="absolute right-[4px] bottom-[11px]">
            <Shield size={16} color="#4aae4e" />
          </div>
        </div>
        <Scrollbar />
      </div>
      <Taskbar />
    </div>
  );
}
